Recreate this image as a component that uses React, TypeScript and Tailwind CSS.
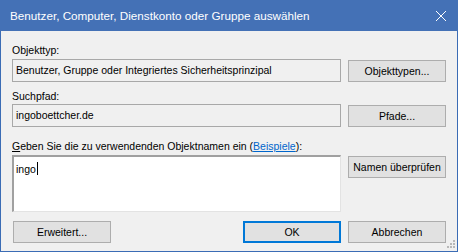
import React from "react";

const font = { fontFamily: '"Liberation Sans", Arial, sans-serif' };

function Btn({ children, primary = false }: { children: React.ReactNode; primary?: boolean }) {
  return (
    <div
      className={
        "flex h-[22px] w-[98px] shrink-0 items-center justify-center bg-[#e1e1e1] text-[10.5px] leading-none text-black " +
        (primary ? "border-2 border-[#0078d7]" : "border border-[#adadad]")
      }
    >
      {children}
    </div>
  );
}

export default function App() {
  return (
    <div className="flex h-[252px] w-[458px] flex-col border-x border-b border-[#3b6cb5] bg-[#f0f0f0]" style={font}>
      <div className="-mx-px flex h-[31px] shrink-0 items-center justify-between bg-[#4471b6] pl-[10px] pr-[10px]">
        <span className="text-[11.7px] text-white">Benutzer, Computer, Dienstkonto oder Gruppe auswählen</span>
        <svg width="12" height="12" viewBox="0 0 12 12" className="mr-[1px]">
          <path d="M1 1 L11 11 M11 1 L1 11" stroke="white" strokeWidth="1" />
        </svg>
      </div>
      <div className="relative flex flex-1 flex-col px-[11px] text-[10.5px] text-black">
        <div className="mt-[12px] h-[14px] leading-[14px]">Objekttyp:</div>
        <div className="mt-[2px] flex gap-[7px]">
          <div className="flex h-[23px] w-[329px] items-center border border-[#a8a8a8] bg-[#f0f0f0] pl-[3px]">
            Benutzer, Gruppe oder Integriertes Sicherheitsprinzipal
          </div>
          <div className="mt-px">
            <Btn>Objekttypen...</Btn>
          </div>
        </div>
        <div className="mt-[7px] h-[14px] leading-[14px]">Suchpfad:</div>
        <div className="mt-[1px] flex gap-[7px]">
          <div className="flex h-[23px] w-[329px] items-center border border-[#a8a8a8] bg-[#f0f0f0] pl-[3px]">
            ingoboettcher.de
          </div>
          <div className="mt-px">
            <Btn>Pfade...</Btn>
          </div>
        </div>
        <div className="mt-[12px] h-[14px] leading-[14px]">
          <span className="underline">G</span>eben Sie die zu verwendenden Objektnamen ein (
          <span className="text-[#0066cc] underline">Beispiele</span>):
        </div>
        <div className="mt-[2px] flex gap-[7px]">
          <div className="h-[57px] w-[329px] border-b border-l-2 border-r border-t-2 border-b-[#e3e3e3] border-l-[#a0a0a0] border-r-[#e3e3e3] border-t-[#a0a0a0] bg-white pl-[2px] pt-[3px]">
            <span className="leading-[14px]">ingo</span>
            <span className="ml-px inline-block h-[13px] w-px translate-y-[2px] bg-black align-baseline"></span>
          </div>
          <div className="mt-px">
            <Btn>Namen überprüfen</Btn>
          </div>
        </div>
        <div className="mt-[9px] flex">
          <div className="ml-px">
            <Btn>Erweitert...</Btn>
          </div>
          <div className="ml-auto flex gap-[7px]">
            <Btn primary>OK</Btn>
            <Btn>Abbrechen</Btn>
          </div>
        </div>
        <svg className="absolute bottom-[2px] right-[1px]" width="9" height="9" viewBox="0 0 9 9">
          <rect x="6" y="0" width="2" height="2" fill="#b8b8b8" />
          <rect x="3" y="3" width="2" height="2" fill="#b8b8b8" />
          <rect x="6" y="3" width="2" height="2" fill="#b8b8b8" />
          <rect x="0" y="6" width="2" height="2" fill="#b8b8b8" />
          <rect x="3" y="6" width="2" height="2" fill="#b8b8b8" />
          <rect x="6" y="6" width="2" height="2" fill="#b8b8b8" />
        </svg>
      </div>
    </div>
  );
}
